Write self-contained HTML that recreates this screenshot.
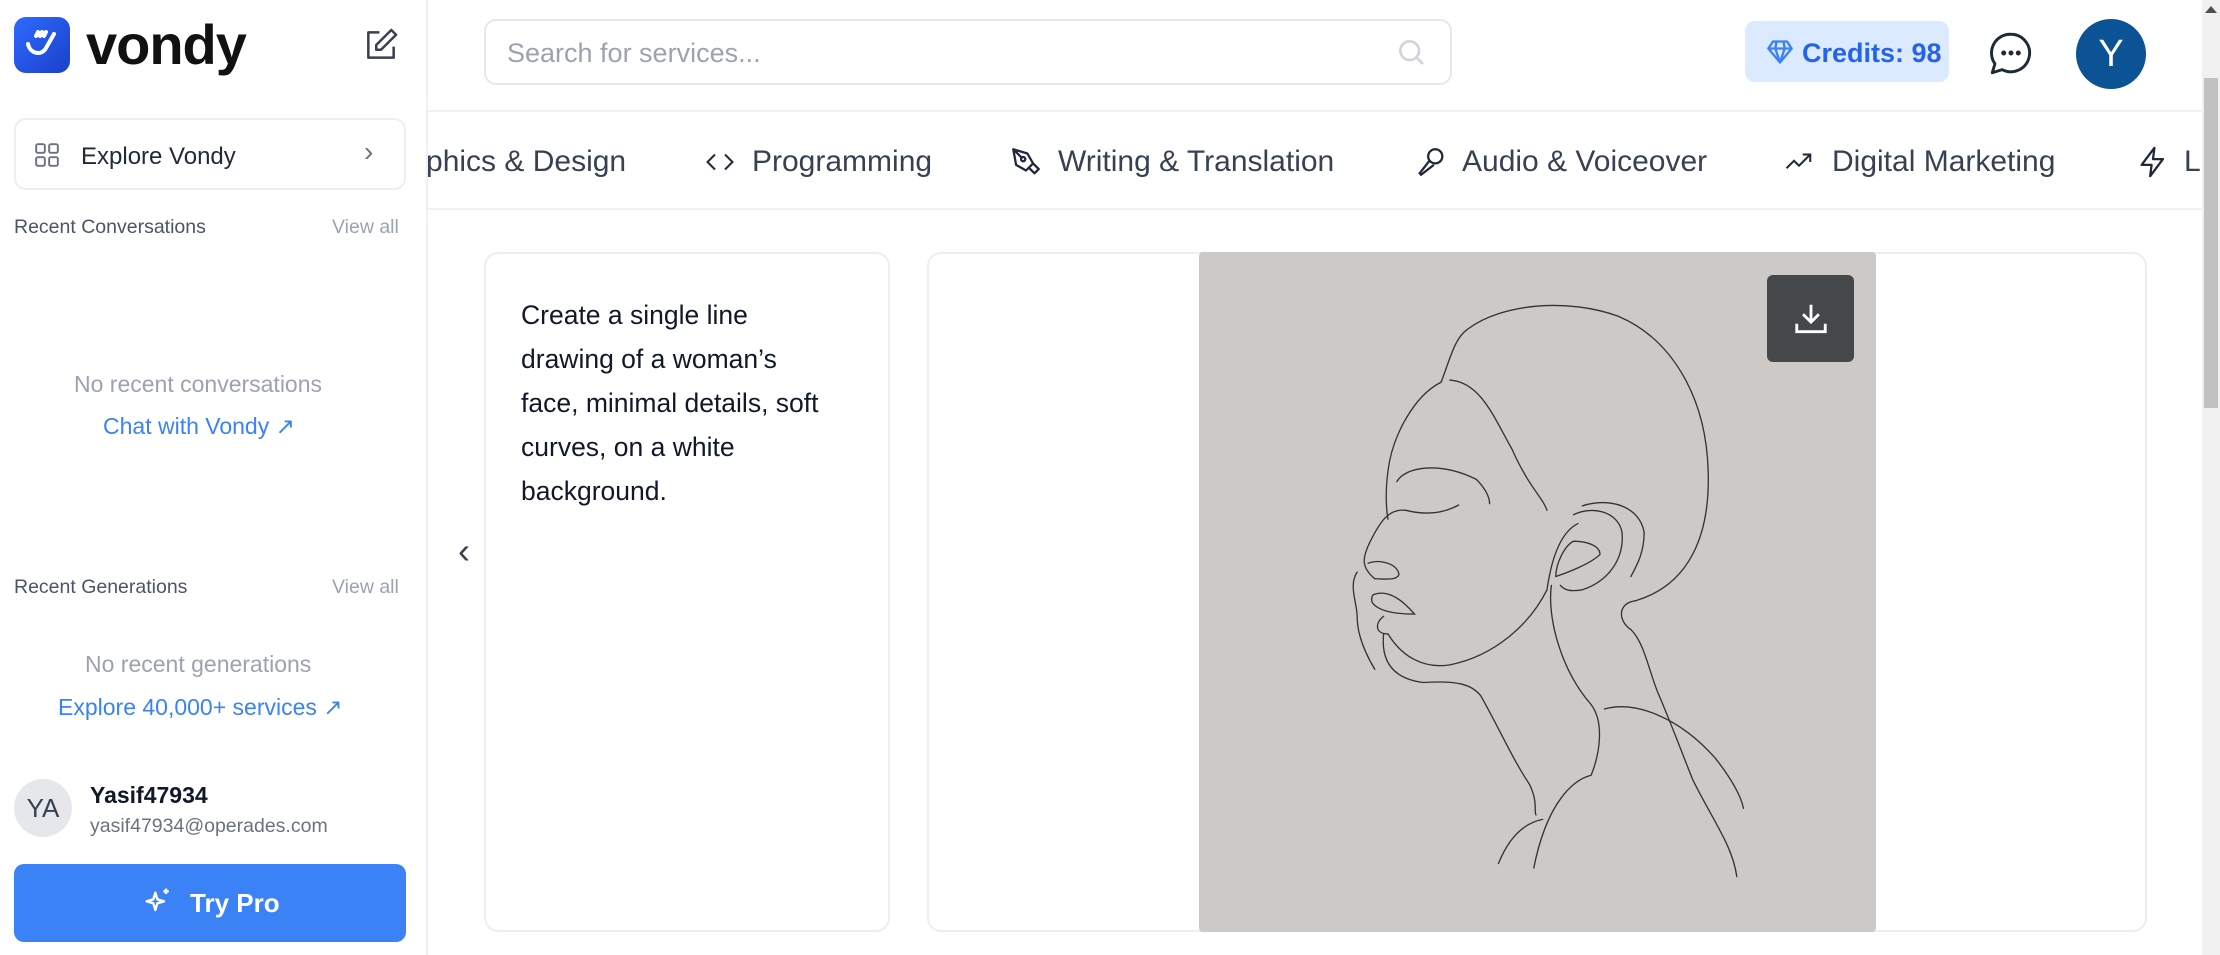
<!DOCTYPE html>
<html><head><meta charset="utf-8"><style>
*{box-sizing:border-box;margin:0;padding:0}
body{width:2220px;height:955px;overflow:hidden;background:#fff;font-family:"Liberation Sans",sans-serif;position:relative;color:#1f2937}
.a{position:absolute}
.side{left:0;top:0;width:428px;height:955px;background:#fff;border-right:2px solid #eef0f3;z-index:5}
.cat{top:145px;font-size:30px;color:#374151;white-space:nowrap;display:flex;align-items:center}
.cat svg{margin-right:14px}
</style></head><body>
<div class="a" style="left:484px;top:19px;width:968px;height:66px;border:2px solid #e5e7eb;border-radius:12px"></div>
<div class="a" style="left:507px;top:38px;font-size:27px;color:#9ca3af">Search for services...</div>
<svg class="a" style="left:1395px;top:36px" width="32" height="32" viewBox="0 0 24 24" fill="none" stroke="#d1d5db" stroke-width="2"><circle cx="11" cy="11" r="7"/><path d="M21 21l-5-5"/></svg>
<div class="a" style="left:1745px;top:21px;width:204px;height:61px;background:#dbeafe;border-radius:10px"></div>
<svg class="a" style="left:1766px;top:38px" width="28" height="28" viewBox="0 0 24 24" fill="none" stroke="#3b82f6" stroke-width="2" stroke-linejoin="round"><path d="M6 3h12l4 6-10 12L2 9z M2 9h20 M9 3l-1 6 4 12 4-12-1-6"/></svg>
<div class="a" style="left:1802px;top:38px;font-size:27px;color:#2563eb;font-weight:bold">Credits: 98</div>
<svg class="a" style="left:1986px;top:28px" width="50" height="50" viewBox="0 0 24 24" fill="none" stroke="#1f2937" stroke-width="1.4" stroke-linejoin="round"><path d="M12 3a9 9 0 1 1-4.2 17L3 21.5l1.3-4.3A9 9 0 0 1 12 3z"/><circle cx="8.5" cy="12" r=".5" fill="#1f2937"/><circle cx="12" cy="12" r=".5" fill="#1f2937"/><circle cx="15.5" cy="12" r=".5" fill="#1f2937"/></svg>
<div class="a" style="left:2076px;top:19px;width:70px;height:70px;border-radius:50%;background:#0b5394;color:#fff;font-size:38px;text-align:center;line-height:70px">Y</div>
<div class="a" style="left:428px;top:110px;width:1774px;height:2px;background:#eef0f3"></div>
<div class="a" style="left:428px;top:208px;width:1774px;height:2px;background:#eef0f3"></div>
<div class="a cat" style="left:376px">Graphics &amp; Design</div>
<div class="a cat" style="left:702px"><svg width="36" height="30" viewBox="0 0 24 24" fill="none" stroke="#1f2937" stroke-width="1.6"><path d="M8 6l-6 6 6 6M16 6l6 6-6 6"/></svg>Programming</div>
<div class="a cat" style="left:1008px"><svg width="36" height="34" viewBox="0 0 24 24" fill="none" stroke="#1f2937" stroke-width="1.6" stroke-linejoin="round"><path d="M3 3l10 3 4 7-5 5-7-4z M3 3l6 6 M17 13l4 4-3 3-4-4"/><circle cx="10" cy="10" r="1.5"/></svg>Writing &amp; Translation</div>
<div class="a cat" style="left:1414px"><svg width="34" height="34" viewBox="0 0 24 24" fill="none" stroke="#1f2937" stroke-width="1.6"><circle cx="15" cy="8" r="5"/><path d="M11 11l-7 9 1 1 9-7"/></svg>Audio &amp; Voiceover</div>
<div class="a cat" style="left:1780px"><svg width="38" height="30" viewBox="0 0 24 24" fill="none" stroke="#1f2937" stroke-width="1.6"><path d="M2 17l6-6 4 4 9-9M15 6h6v6"/></svg>Digital Marketing</div>
<div class="a cat" style="left:2136px"><svg width="34" height="34" viewBox="0 0 24 24" fill="none" stroke="#1f2937" stroke-width="1.6" stroke-linejoin="round"><path d="M13 2L4 14h7l-1 8 9-12h-7z"/></svg>L</div>
<div class="a" style="left:2202px;top:0;width:18px;height:955px;background:#f1f1f1"></div>
<div class="a" style="left:2204px;top:78px;width:14px;height:330px;background:#c1c1c1"></div>
<div class="a" style="left:2205px;top:6px;width:0;height:0;border-left:6px solid transparent;border-right:6px solid transparent;border-bottom:7px solid #505050"></div>
<div class="a" style="left:458px;top:530px;font-size:36px;color:#374151">‹</div>
<div class="a" style="left:484px;top:252px;width:406px;height:680px;border:2px solid #eceef1;border-radius:14px"></div>
<div class="a" style="left:521px;top:293px;font-size:26.5px;line-height:44px;color:#111827">Create a single line<br>drawing of a woman’s<br>face, minimal details, soft<br>curves, on a white<br>background.</div>
<div class="a" style="left:927px;top:252px;width:1220px;height:680px;border:2px solid #eceef1;border-radius:14px"></div>
<div class="a" style="left:1199px;top:252px;width:677px;height:680px;background:#cdc9c6;border-radius:4px;overflow:hidden">
<svg width="677" height="680" viewBox="22 5 1513 1540" fill="none" stroke="#333" stroke-width="3" stroke-linecap="round">
<path d="M560,300 C580,250 590,200 620,180 C700,120 850,110 960,150 C1080,200 1160,330 1165,500 C1170,650 1120,760 1000,795"/>
<path d="M580,295 C650,300 680,380 720,450 C760,540 790,560 800,590"/>
<path d="M560,300 C500,330 450,420 440,500 C432,560 438,600 440,610"/>
<path d="M460,525 C480,490 560,480 640,520 C660,540 670,560 670,575"/>
<path d="M600,578 C560,600 520,600 480,590 C440,585 420,620 400,660 C380,700 380,720 410,745"/>
<path d="M395,710 C420,700 460,710 465,735 C460,750 430,745 410,745"/>
<path d="M410,780 C440,770 470,790 500,825 C460,825 420,820 405,800 C400,790 405,780 410,780"/>
<path d="M430,830 C410,845 410,870 440,870"/>
<path d="M440,870 C470,920 520,950 580,940 C680,920 760,850 800,770 C810,700 830,640 870,620"/>
<path d="M860,600 C900,580 960,590 970,640 C975,700 940,750 880,770 C850,775 840,770 830,760"/>
<path d="M860,660 C890,660 920,670 920,690 C900,710 850,730 820,740 C820,710 840,670 860,660"/>
<path d="M880,580 C940,560 1010,580 1020,640 C1020,690 1000,720 990,740"/>
<path d="M1000,795 C960,800 960,840 990,860 C1020,890 1030,950 1050,1000 C1080,1070 1110,1150 1130,1200 C1180,1300 1220,1350 1230,1420"/>
<path d="M370,730 C350,760 370,800 370,830 C370,860 380,900 410,950"/>
<path d="M430,870 C425,920 440,970 520,980 C600,975 630,985 650,1010 C690,1080 720,1150 760,1210 C780,1250 770,1270 775,1280"/>
<path d="M810,760 C800,830 830,950 900,1030 C930,1070 920,1140 900,1190 C860,1200 800,1250 770,1400"/>
<path d="M930,1040 C1000,1020 1100,1060 1180,1150 C1220,1200 1240,1240 1245,1265"/>
<path d="M790,1290 C740,1300 710,1340 690,1390"/>
</svg>
</div>
<div class="a" style="left:1767px;top:275px;width:87px;height:87px;background:#45484b;border-radius:6px"></div>
<svg class="a" style="left:1792px;top:300px" width="38" height="38" viewBox="0 0 24 24" fill="none" stroke="#fff" stroke-width="1.8"><path d="M12 3v11M7 9l5 5 5-5M3 15v5h18v-5"/></svg>
<div class="a side">
<div class="a" style="left:14px;top:17px;width:56px;height:56px;border-radius:12px;background:linear-gradient(135deg,#2f6bff,#1a3fc9)"></div>
<svg class="a" style="left:18px;top:20px" width="48" height="48" viewBox="0 0 24 24" fill="none" stroke="#fff" stroke-width="2" stroke-linecap="round"><path d="M5 12c1 5 7 6 9 2l4-7M9 8l1-2M11 8l1-2M13 8l1-2"/></svg>
<div class="a" style="left:86px;top:12px;font-size:56px;font-weight:bold;color:#111;letter-spacing:-1px">vondy</div>
<svg class="a" style="left:362px;top:26px" width="38" height="38" viewBox="0 0 24 24" fill="none" stroke="#374151" stroke-width="1.6" stroke-linejoin="round"><path d="M11 4H4v16h16v-7"/><path d="M18.5 2.5l3 3L12 15H9v-3z"/></svg>
<div class="a" style="left:14px;top:118px;width:392px;height:72px;border:2px solid #eceef1;border-radius:12px"></div>
<svg class="a" style="left:34px;top:142px" width="26" height="26" viewBox="0 0 24 24" fill="none" stroke="#6b7280" stroke-width="1.8"><rect x="2" y="2" width="8" height="8" rx="1.5"/><rect x="14" y="2" width="8" height="8" rx="1.5"/><rect x="2" y="14" width="8" height="8" rx="1.5"/><rect x="14" y="14" width="8" height="8" rx="1.5"/></svg>
<div class="a" style="left:81px;top:143px;font-size:24px;color:#1f2937">Explore Vondy</div>
<div class="a" style="left:364px;top:136px;font-size:28px;color:#6b7280">›</div>
<div class="a" style="left:14px;top:216px;font-size:19.5px;color:#4b5563">Recent Conversations</div>
<div class="a" style="left:332px;top:216px;font-size:19.5px;color:#9ca3af">View all</div>
<div class="a" style="left:74px;top:371px;font-size:23px;color:#9ca3af">No recent conversations</div>
<div class="a" style="left:103px;top:413px;font-size:23px;color:#3b82f6">Chat with Vondy ↗</div>
<div class="a" style="left:14px;top:576px;font-size:19.5px;color:#4b5563">Recent Generations</div>
<div class="a" style="left:332px;top:576px;font-size:19.5px;color:#9ca3af">View all</div>
<div class="a" style="left:85px;top:651px;font-size:23px;color:#9ca3af">No recent generations</div>
<div class="a" style="left:58px;top:694px;font-size:23px;color:#3b82f6">Explore 40,000+ services ↗</div>
<div class="a" style="left:14px;top:779px;width:58px;height:58px;border-radius:50%;background:#e5e7eb;color:#374151;font-size:26px;text-align:center;line-height:58px">YA</div>
<div class="a" style="left:90px;top:782px;font-size:23px;font-weight:bold;color:#111827">Yasif47934</div>
<div class="a" style="left:90px;top:815px;font-size:19.5px;color:#6b7280">yasif47934@operades.com</div>
<div class="a" style="left:14px;top:864px;width:392px;height:78px;background:#3b82f6;border-radius:10px"></div>
<svg class="a" style="left:142px;top:886px" width="32" height="32" viewBox="0 0 24 24" fill="none" stroke="#fff" stroke-width="1.8" stroke-linejoin="round"><path d="M10 5l1.5 5 5 1.5-5 1.5L10 18l-1.5-5-5-1.5 5-1.5z M18 2v4M16 4h4"/></svg>
<div class="a" style="left:190px;top:888px;font-size:26px;font-weight:bold;color:#fff">Try Pro</div>
</div>
</body></html>
